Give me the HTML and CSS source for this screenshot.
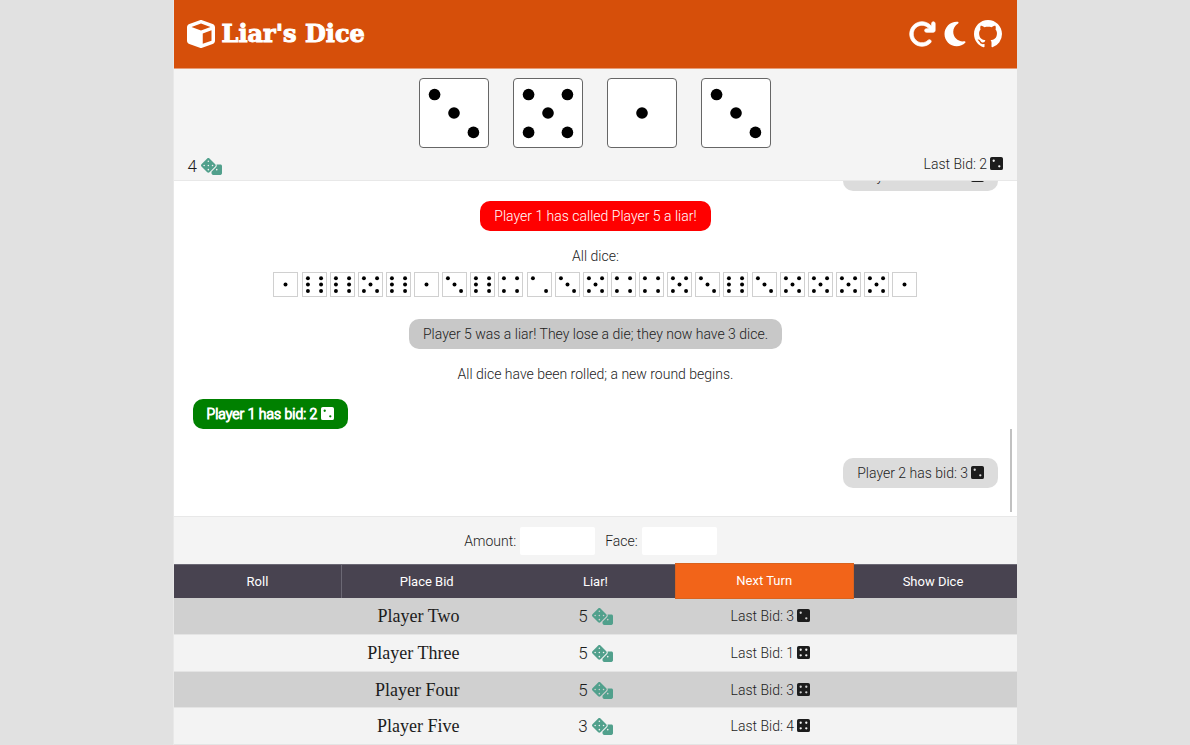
FILE: index.html
```html
<!DOCTYPE html>
<html lang="en">
<head>
<meta charset="utf-8">
<meta name="viewport" content="width=device-width, initial-scale=1">
<title>Liar's Dice</title>
<link rel="stylesheet" href="styles.css">
</head>
<body>
<svg class="sprite" aria-hidden="true">
  <symbol id="die-1" viewBox="0 0 70 70"><circle cx="35" cy="35" r="6"/></symbol>
  <symbol id="die-2" viewBox="0 0 70 70"><circle cx="15" cy="16" r="6"/><circle cx="55" cy="55" r="6"/></symbol>
  <symbol id="die-3" viewBox="0 0 70 70"><circle cx="15" cy="16" r="6"/><circle cx="35" cy="35" r="6"/><circle cx="55" cy="55" r="6"/></symbol>
  <symbol id="die-4" viewBox="0 0 70 70"><circle cx="15" cy="16" r="6"/><circle cx="55" cy="16" r="6"/><circle cx="15" cy="55" r="6"/><circle cx="55" cy="55" r="6"/></symbol>
  <symbol id="die-5" viewBox="0 0 70 70"><circle cx="15" cy="16" r="6"/><circle cx="55" cy="16" r="6"/><circle cx="35" cy="35" r="6"/><circle cx="15" cy="55" r="6"/><circle cx="55" cy="55" r="6"/></symbol>
  <symbol id="die-6" viewBox="0 0 70 70"><circle cx="15" cy="16" r="6"/><circle cx="55" cy="16" r="6"/><circle cx="15" cy="35" r="6"/><circle cx="55" cy="35" r="6"/><circle cx="15" cy="55" r="6"/><circle cx="55" cy="55" r="6"/></symbol>
  <symbol id="face-2" viewBox="0 32 448 448"><path fill-rule="evenodd" d="M64 32H384a64 64 0 0 1 64 64V416a64 64 0 0 1-64 64H64a64 64 0 0 1-64-64V96a64 64 0 0 1 64-64zM128 200a40 40 0 1 0 0-80a40 40 0 1 0 0 80zM320 392a40 40 0 1 0 0-80a40 40 0 1 0 0 80z"/></symbol>
  <symbol id="face-4" viewBox="0 32 448 448"><path fill-rule="evenodd" d="M64 32H384a64 64 0 0 1 64 64V416a64 64 0 0 1-64 64H64a64 64 0 0 1-64-64V96a64 64 0 0 1 64-64zM128 200a40 40 0 1 0 0-80a40 40 0 1 0 0 80zM320 392a40 40 0 1 0 0-80a40 40 0 1 0 0 80zM320 200a40 40 0 1 0 0-80a40 40 0 1 0 0 80zM128 392a40 40 0 1 0 0-80a40 40 0 1 0 0 80z"/></symbol>
  <symbol id="dice" viewBox="0 0 640 512"><path fill-rule="evenodd" d="M592 192H473.26c12.69 29.59 7.12 65.2-17 89.32L320 417.58V464c0 26.51 21.49 48 48 48h224c26.51 0 48-21.49 48-48V240c0-26.51-21.49-48-48-48zM480 376a24 24 0 1 1 0-48a24 24 0 1 1 0 48zM433.63 189.3L258.7 14.37c-19.16-19.16-50.23-19.16-69.39 0L14.37 189.3c-19.16 19.16-19.16 50.23 0 69.39L189.3 433.63c19.16 19.16 50.23 19.16 69.39 0L433.63 258.7c19.16-19.17 19.16-50.24 0-69.4zM96 248a24 24 0 1 1 0-48a24 24 0 1 1 0 48zM224 376a24 24 0 1 1 0-48a24 24 0 1 1 0 48zM224 248a24 24 0 1 1 0-48a24 24 0 1 1 0 48zM224 120a24 24 0 1 1 0-48a24 24 0 1 1 0 48zM352 248a24 24 0 1 1 0-48a24 24 0 1 1 0 48z"/></symbol>
</svg>

<div class="page">
  <header class="header">
    <h1 class="brand">
      <svg class="header-icon" viewBox="0 0 512 512" aria-hidden="true"><path d="M234.5 5.7c13.9-5 29.1-5 43.1 0l192 68.6C495 83.4 512 107.5 512 134.6V377.4c0 27-17 51.2-42.5 60.3l-192 68.6c-13.9 5-29.1 5-43.1 0l-192-68.6C17 428.6 0 404.5 0 377.4V134.6c0-27 17-51.2 42.5-60.3l192-68.6zM256 66L82.3 128 256 190l173.7-62L256 66zm32 368.6l160-57.1v-188L288 246.6v188z"/></svg>
      <span>Liar's Dice</span>
    </h1>
    <nav class="tools">
      <button class="tool" type="button" aria-label="Restart"><svg class="header-icon" viewBox="0 0 512 512"><path d="M386.3 160H336c-17.7 0-32 14.3-32 32s14.3 32 32 32H464c17.7 0 32-14.3 32-32V64c0-17.7-14.3-32-32-32s-32 14.3-32 32v51.2L414.4 97.6c-87.5-87.5-229.3-87.5-316.8 0s-87.5 229.3 0 316.8s229.3 87.5 316.8 0c12.5-12.5 12.5-32.8 0-45.3s-32.8-12.5-45.3 0c-62.5 62.5-163.8 62.5-226.3 0s-62.5-163.8 0-226.3s163.8-62.5 226.3 0L386.3 160z" stroke="currentColor" stroke-width="14"/></svg></button>
      <button class="tool" type="button" aria-label="Dark mode"><svg class="header-icon header-icon-narrow" viewBox="0 0 384 512"><path d="M223.5 32C100 32 0 132.3 0 256S100 480 223.5 480c60.6 0 115.5-24.2 155.8-63.4c5-4.9 6.3-12.5 3.1-18.7s-10.1-9.7-17-8.5c-9.8 1.7-19.8 2.6-30.1 2.6c-96.9 0-175.5-78.8-175.5-176c0-65.8 36-123.1 89.3-153.3c6.1-3.5 9.2-10.5 7.7-17.3s-7.3-11.9-14.3-12.5c-6.3-.5-12.6-.8-19-.8z"/></svg></button>
      <a class="tool" href="#" aria-label="GitHub"><svg class="header-icon" viewBox="0 0 16 16"><path d="M8 0C3.58 0 0 3.58 0 8c0 3.54 2.29 6.53 5.47 7.59.4.07.55-.17.55-.38 0-.19-.01-.82-.01-1.49-2.01.37-2.53-.49-2.69-.94-.09-.23-.48-.94-.82-1.13-.28-.15-.68-.52-.01-.53.63-.01 1.08.58 1.23.82.72 1.21 1.87.87 2.33.66.07-.52.28-.87.51-1.07-1.78-.2-3.64-.89-3.64-3.95 0-.87.31-1.59.82-2.15-.08-.2-.36-1.02.08-2.12 0 0 .67-.21 2.2.82.64-.18 1.32-.27 2-.27s1.36.09 2 .27c1.53-1.04 2.2-.82 2.2-.82.44 1.1.16 1.92.08 2.12.51.56.82 1.27.82 2.15 0 3.07-1.87 3.75-3.65 3.95.29.25.54.73.54 1.48 0 1.07-.01 1.93-.01 2.2 0 .21.15.46.55.38A8.01 8.01 0 0 0 16 8c0-4.42-3.58-8-8-8z"/></svg></a>
    </nav>
  </header>

  <section class="hand">
    <div class="hand-dice">
      <svg class="die"><use href="#die-3"/></svg>
      <svg class="die"><use href="#die-5"/></svg>
      <svg class="die"><use href="#die-1"/></svg>
      <svg class="die"><use href="#die-3"/></svg>
    </div>
    <div class="hand-info">
      <span class="count">4 <svg class="dice-icon"><use href="#dice"/></svg></span>
      <span>Last Bid: 2 <svg class="face"><use href="#face-2"/></svg></span>
    </div>
  </section>

  <main class="log">
    <p class="bubble bubble-right">Player 5 has bid: 4 <svg class="face"><use href="#face-4"/></svg></p>
    <p class="bubble bubble-call">Player 1 has called Player 5 a liar!</p>
    <p class="note">All dice:</p>
    <div class="all-dice">
      <svg class="mini"><use href="#die-1"/></svg>
      <svg class="mini"><use href="#die-6"/></svg>
      <svg class="mini"><use href="#die-6"/></svg>
      <svg class="mini"><use href="#die-5"/></svg>
      <svg class="mini"><use href="#die-6"/></svg>
      <svg class="mini"><use href="#die-1"/></svg>
      <svg class="mini"><use href="#die-3"/></svg>
      <svg class="mini"><use href="#die-6"/></svg>
      <svg class="mini"><use href="#die-4"/></svg>
      <svg class="mini"><use href="#die-2"/></svg>
      <svg class="mini"><use href="#die-3"/></svg>
      <svg class="mini"><use href="#die-5"/></svg>
      <svg class="mini"><use href="#die-4"/></svg>
      <svg class="mini"><use href="#die-4"/></svg>
      <svg class="mini"><use href="#die-5"/></svg>
      <svg class="mini"><use href="#die-3"/></svg>
      <svg class="mini"><use href="#die-6"/></svg>
      <svg class="mini"><use href="#die-3"/></svg>
      <svg class="mini"><use href="#die-5"/></svg>
      <svg class="mini"><use href="#die-5"/></svg>
      <svg class="mini"><use href="#die-5"/></svg>
      <svg class="mini"><use href="#die-5"/></svg>
      <svg class="mini"><use href="#die-1"/></svg>
    </div>
    <p class="bubble bubble-result">Player 5 was a liar! They lose a die; they now have 3 dice.</p>
    <p class="note">All dice have been rolled; a new round begins.</p>
    <p class="bubble bubble-own">Player 1 has bid: 2 <svg class="face"><use href="#face-2"/></svg></p>
    <p class="bubble bubble-right">Player 2 has bid: 3 <svg class="face"><use href="#face-2"/></svg></p>
    <span class="scroll-thumb"></span>
  </main>

  <form class="bid-form">
    <label for="amount">Amount:</label>
    <input class="bid-input" id="amount" type="text" inputmode="numeric">
    <label class="face-label" for="face">Face:</label>
    <input class="bid-input" id="face" type="text" inputmode="numeric">
  </form>

  <div class="actions">
    <button class="action action-first" type="button">Roll</button>
    <button class="action" type="button">Place Bid</button>
    <button class="action" type="button">Liar!</button>
    <button class="action action-active" type="button">Next Turn</button>
    <button class="action" type="button">Show Dice</button>
  </div>

  <table class="players">
    <tr><th class="name" scope="row">Player Two</th><td class="count">5 <svg class="dice-icon"><use href="#dice"/></svg></td><td class="last">Last Bid: 3 <svg class="face"><use href="#face-2"/></svg></td></tr>
    <tr><th class="name" scope="row">Player Three</th><td class="count">5 <svg class="dice-icon"><use href="#dice"/></svg></td><td class="last">Last Bid: 1 <svg class="face"><use href="#face-4"/></svg></td></tr>
    <tr><th class="name" scope="row">Player Four</th><td class="count">5 <svg class="dice-icon"><use href="#dice"/></svg></td><td class="last">Last Bid: 3 <svg class="face"><use href="#face-4"/></svg></td></tr>
    <tr><th class="name" scope="row">Player Five</th><td class="count">3 <svg class="dice-icon"><use href="#dice"/></svg></td><td class="last">Last Bid: 4 <svg class="face"><use href="#face-4"/></svg></td></tr>
  </table>
</div>
</body>
</html>
```
FILE: styles.css
```css
* {
  box-sizing: border-box;
}

body {
  margin: 0;
  background: #e1e1e1;
  color: #1c1c1c;
  font: 300 14px/20px Roboto, sans-serif;
}

p, h1 {
  margin: 0;
}

.sprite {
  display: none;
}

.page {
  display: flex;
  flex-direction: column;
  width: 71%;
  height: 100vh;
  min-height: 640px;
  margin: 0 auto;
  border-left: 1px solid #e8e8e8;
  background: #f4f4f4;
}

.header {
  display: flex;
  align-items: center;
  justify-content: space-between;
  flex: none;
  padding: 15px 15px 15px 13px;
  background: #d64f0a;
  border-bottom: 1px solid #e79c78;
  color: #fff;
}

.brand {
  display: flex;
  align-items: center;
  gap: 7px;
  font: 700 24px/38px "DejaVu Serif", serif;
  -webkit-text-stroke: 1px #fff;
}

.tools {
  display: flex;
  gap: 8px;
}

.tool {
  display: flex;
  padding: 0;
  border: 0;
  background: none;
  color: inherit;
  cursor: pointer;
}

.header-icon {
  display: block;
  width: 28px;
  height: 28px;
  fill: currentColor;
}

.header-icon-narrow {
  width: 22px;
}

.hand {
  flex: none;
  padding: 9px 14px 2px;
  border-bottom: 1px solid #e8e8e8;
}

.hand-dice {
  display: flex;
  justify-content: center;
  gap: 24px;
}

.die {
  width: 70px;
  height: 70px;
  border: 1px solid #666;
  border-radius: 4px;
  background: #fff;
}

.hand-info {
  display: flex;
  justify-content: space-between;
  padding-top: 6px;
}

.count {
  font-size: 17px;
  line-height: 24px;
}

.dice-icon {
  width: 21px;
  height: 17px;
  fill: #51a08c;
  vertical-align: -3px;
}

.face {
  width: 13px;
  height: 13px;
  fill: currentColor;
  vertical-align: -1px;
}

.log {
  position: relative;
  display: flex;
  flex-direction: column;
  justify-content: flex-end;
  align-items: center;
  flex: 1;
  min-height: 0;
  padding: 0 19px 28px;
  overflow: hidden;
  background: #fff;
}

.bubble {
  flex: none;
  padding: 5px 14px;
  border-radius: 10px;
}

.bubble-right {
  align-self: flex-end;
  margin-top: 29px;
  background: #dcdcdc;
}

.bubble-call {
  margin-top: 10px;
  background: #f00;
  color: #fff;
}

.bubble-result {
  margin-top: 22px;
  background: #c8c8c8;
}

.bubble-own {
  align-self: flex-start;
  margin-top: 15px;
  background: #008000;
  color: #fff;
  -webkit-text-stroke: 1px #fff;
}

.note {
  flex: none;
  margin-top: 15px;
}

.all-dice {
  display: flex;
  flex: none;
  justify-content: space-between;
  width: 644px;
  max-width: 100%;
  margin-top: 6px;
}

.mini {
  width: 25px;
  height: 25px;
  border: 1px solid #d0d0d0;
  background: #fff;
}

.scroll-thumb {
  position: absolute;
  right: 5px;
  bottom: 4px;
  width: 2px;
  height: 83px;
  background: #c1c1c1;
}

.bid-form {
  display: flex;
  align-items: center;
  justify-content: center;
  flex: none;
  gap: 4px;
  padding: 10px 10px 9px 0;
  border-top: 1px solid #e8e8e8;
}

.face-label {
  margin-left: 6px;
}

.bid-input {
  width: 75px;
  height: 28px;
  padding: 4px 8px;
  border: 0;
  border-radius: 2px;
  background: #fff;
  font: inherit;
}

.actions {
  display: flex;
  flex: none;
}

.action {
  flex: none;
  width: 20%;
  height: 34px;
  padding: 0;
  border: 0;
  border-top: 1px solid #6b6874;
  background: #484350;
  color: #fff;
  font: 400 13px/20px Roboto, sans-serif;
  cursor: pointer;
}

.action-first {
  border-right: 1px solid #6b6874;
}

.action-active {
  position: relative;
  width: calc(20% + 10px);
  height: 36px;
  margin: -1px -5px;
  border: 1px solid #d9631f;
  background: #f26419;
}

.players {
  flex: none;
  width: 100%;
  height: 147px;
  border-collapse: collapse;
  table-layout: fixed;
}

.players tr {
  background: #f3f3f3;
}

.players tr:nth-child(odd) {
  background: #d0d0d0;
}

.players th,
.players td {
  height: 36px;
  padding: 0;
  border-bottom: 1px solid #e4e4e4;
}

.players .name {
  width: 34%;
  padding-right: 1px;
  font: 400 18px/22px "Liberation Serif", serif;
  text-align: right;
}

.players .count {
  width: 32%;
  text-align: center;
}
```
